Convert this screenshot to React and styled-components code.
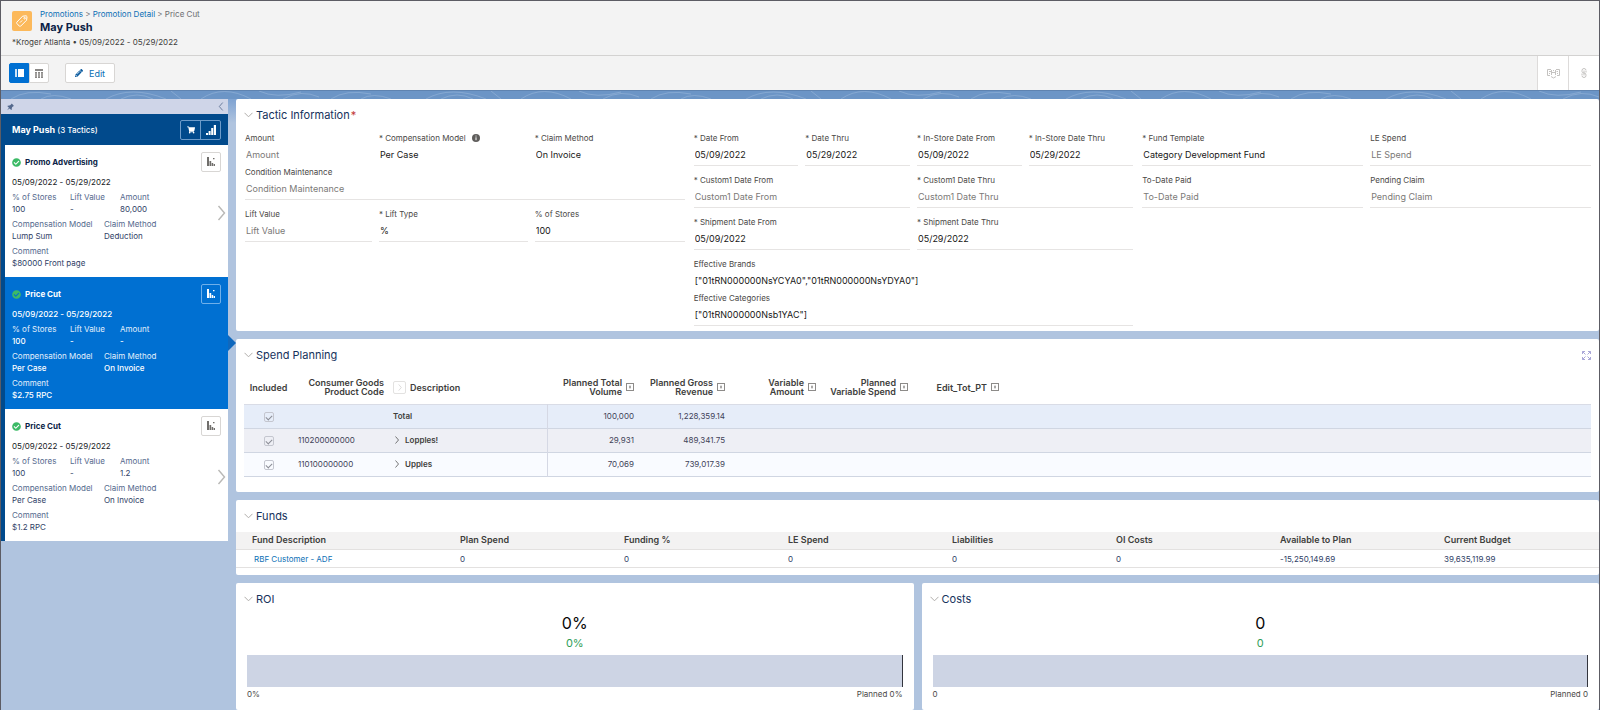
import React from "react";
import styled, { createGlobalStyle, css } from "styled-components";
import { FaShoppingCart, FaPencilAlt, FaCheckCircle } from "react-icons/fa";
import { TiPin } from "react-icons/ti";

const GlobalStyle = createGlobalStyle`
  * {
    box-sizing: border-box;
  }

  body {
    margin: 0;
    background-color: #b0c4df;
    color: #2b2826;
    font-family: Inter, "Open Sans", sans-serif;
    font-size: 8px;
    line-height: 12px;
  }

  button,
  input {
    font-family: inherit;
  }
`;

const Page = styled.div`
  min-height: 100vh;
  border: 1px solid #5c5c64;
`;

/* Page header */

const PageHeader = styled.header`
  padding: 7px 11px;
  background-color: #f3f3f3;
  border-bottom: 1px solid #d3d2d1;
`;

const HeaderTop = styled.div`
  display: flex;
  align-items: center;
  gap: 8px;
`;

const AppIcon = styled.span`
  display: flex;
  align-items: center;
  justify-content: center;
  width: 20px;
  height: 20px;
  border-radius: 2px;
  background-color: #fcb95b;
`;

const Breadcrumbs = styled.nav`
  color: #6b6d70;
`;

const CrumbLink = styled.a`
  color: #0b6fb5;
  text-decoration: none;
`;

const PageTitle = styled.h1`
  margin: 0;
  color: #0c1f47;
  font-size: 11px;
  line-height: 14px;
  font-weight: 700;
`;

const SubTitle = styled.p`
  margin: 2px 0 0;
  color: #3e3e3c;
`;

const Toolbar = styled.div`
  display: flex;
  align-items: center;
  justify-content: space-between;
  height: 34px;
  padding-left: 8px;
  background-color: #f3f3f3;
`;

const ToolbarGroup = styled.div`
  display: flex;
  align-items: center;
  height: 100%;
`;

const ViewButton = styled.button`
  display: flex;
  align-items: center;
  justify-content: center;
  width: 20px;
  height: 20px;
  padding: 0;
  border: 1px solid ${(props) => (props.$active ? "#0070d2" : "#d8d6d4")};
  border-radius: ${(props) => (props.$active ? "2px 0 0 2px" : "0 2px 2px 0")};
  background-color: ${(props) => (props.$active ? "#0070d2" : "#ffffff")};
  color: ${(props) => (props.$active ? "#ffffff" : "#8a8886")};
`;

const EditButton = styled.button`
  display: flex;
  align-items: center;
  justify-content: center;
  gap: 6px;
  width: 50px;
  height: 20px;
  margin-left: 16px;
  padding: 0;
  border: 1px solid #d8d6d4;
  border-radius: 2px;
  background-color: #ffffff;
  color: #0b6fb5;
  font-size: 9px;
`;

const CornerButton = styled.button`
  display: flex;
  align-items: center;
  justify-content: center;
  width: 31px;
  height: 100%;
  padding: 0;
  border: 0;
  border-left: 1px solid #dddbda;
  background-color: #ffffff;
  color: #c4c2c0;
`;

/* Body */

const Band = styled.div`
  height: 9px;
  border-top: 1px solid #5f83b0;
  background-color: #6c95c6;

  svg {
    display: block;
  }
`;

const Body = styled.div`
  display: grid;
  grid-template-columns: 227px minmax(0, 1fr);
  gap: 8px;
  background-image: linear-gradient(#7fa3d2, #b0c4df 24px);
`;

const Sidebar = styled.aside`
  align-self: start;
`;

const PinBar = styled.div`
  display: flex;
  align-items: center;
  justify-content: space-between;
  height: 15px;
  padding: 0 4px;
  background-color: #cfd5e8;
  color: #54698d;
`;

const IconButton = styled.button`
  display: flex;
  padding: 0;
  border: 0;
  background: none;
  color: ${(props) => props.$color || "inherit"};
`;

const TacticList = styled.div`
  border-left: 4px solid #014a8c;
`;

const ListHeader = styled.div`
  display: flex;
  align-items: center;
  justify-content: space-between;
  height: 31px;
  padding: 0 7px;
  background-color: #014a8c;
  color: #ffffff;
`;

const ListTitle = styled.h2`
  margin: 0;
  font-size: 9px;
  font-weight: 700;

  span {
    font-size: 8px;
    font-weight: 500;
  }
`;

const ButtonPair = styled.div`
  display: flex;
  border: 1px solid #6d9bc9;
  border-radius: 2px;
`;

const PairButton = styled.button`
  display: flex;
  align-items: center;
  justify-content: center;
  width: 19px;
  height: 18px;
  padding: 0;
  border: 0;
  background: none;
  color: #ffffff;

  & + & {
    width: 20px;
    border-left: 1px solid #6d9bc9;
  }
`;

const TacticCard = styled.article`
  position: relative;
  height: 132px;
  padding: 7px 7px 0;
  background-color: #ffffff;
  color: #2f4166;

  ${(props) =>
    props.$selected &&
    css`
      background-color: #0070d2;
      color: #ffffff;
      font-weight: 500;

      &::after {
        content: "";
        position: absolute;
        top: 58px;
        left: 100%;
        border: 8px solid transparent;
        border-right-width: 0;
        border-left-color: #1068bd;
      }
    `}
`;

const CardTop = styled.div`
  display: flex;
  align-items: center;
  gap: 4px;
  height: 20px;
  color: #3cba66;
`;

const CardName = styled.h3`
  flex: 1;
  margin: 0;
  color: ${(props) => (props.$selected ? "#ffffff" : "#0c1f47")};
  font-size: 8px;
  font-weight: 700;
`;

const ChartButton = styled.button`
  display: flex;
  align-items: center;
  justify-content: center;
  width: 20px;
  height: 20px;
  padding: 0;
  border: 1px solid ${(props) => (props.$selected ? "#6fb0ea" : "#d8d6d4")};
  border-radius: 2px;
  background: none;
  color: ${(props) => (props.$selected ? "#ffffff" : "#706e6b")};
`;

const CardDates = styled.p`
  margin: 4px 0 3px;
  color: ${(props) => (props.$selected ? "#ffffff" : "#181b25")};
`;

const Facts = styled.dl`
  display: grid;
  grid-template-columns: ${(props) => props.$columns};
  margin: 0 0 3px;

  dt {
    color: ${(props) => (props.$selected ? "#e3effb" : "#54698d")};
    font-weight: 400;
  }

  dd {
    margin: 0;
  }
`;

const OpenTactic = styled.button`
  position: absolute;
  top: 60px;
  right: 2px;
  display: flex;
  padding: 0;
  border: 0;
  background: none;
  color: #b9b8b6;
`;

const Content = styled.main`
  display: flex;
  flex-direction: column;
  gap: 8px;
`;

const Panel = styled.section`
  min-width: 0;
  padding-bottom: ${(props) => props.$bottom}px;
  border-radius: 2px;
  background-color: #ffffff;
`;

const PanelHead = styled.div`
  display: flex;
  align-items: center;
  gap: 3px;
  height: 32px;
  padding: 0 8px;
  color: #b0adab;
`;

const PanelTitle = styled.h2`
  flex: 1;
  margin: 0;
  color: #16325c;
  font-size: 11px;
  line-height: 16px;
  font-weight: 400;

  span {
    margin-left: 1px;
    color: #c23934;
  }
`;

const FormColumns = styled.div`
  display: grid;
  grid-template-columns: repeat(2, minmax(0, 440fr)) minmax(0, 449fr);
  align-items: start;
  column-gap: 9px;
  padding: 1px 8px 0 9px;
`;

const FieldGrid = styled.div`
  display: grid;
  grid-template-columns: ${(props) => props.$columns};
  gap: 0 7px;
  align-items: start;
`;

const FieldBox = styled.div`
  grid-column: span ${(props) => props.$span || 1};
  margin-bottom: ${(props) => (props.$tight ? 0 : 8)}px;
  border-bottom: 1px solid ${(props) => (props.$tight ? "transparent" : "#e6e4e3")};

  &:last-child {
    margin-bottom: 4px;
  }
`;

const FieldLabel = styled.label`
  display: flex;
  align-items: center;
  gap: 6px;
  height: 12px;
  color: #4a4846;
  white-space: nowrap;
`;

const FieldInput = styled.input`
  display: block;
  width: 100%;
  height: 21px;
  padding: 0 1px;
  border: 0;
  background: none;
  color: #181716;
  font-size: 9px;
  outline: none;

  &::placeholder {
    color: #7b7977;
    opacity: 1;
  }
`;

/* Spend planning */

const SpendWrap = styled.div`
  padding: 4px 8px 0;
`;

const SpendTable = styled.table`
  width: 100%;
  table-layout: fixed;
  border-collapse: collapse;
  color: #3e4258;

  th,
  td {
    padding: 0 5px;
    text-align: right;
  }

  thead th {
    height: 29px;
    padding: 0 5px 4px 0;
    color: #3e3e3c;
    font-size: 9px;
    font-weight: 600;
    line-height: 9px;
    white-space: nowrap;
  }

  td:nth-child(1),
  thead th:nth-child(1) {
    padding-left: 5px;
    text-align: center;
  }

  td:nth-child(2) {
    padding-right: 0;
    text-align: left;
  }

  td:nth-child(3),
  thead th:nth-child(3) {
    padding-left: 4px;
    text-align: left;
  }

  td:nth-child(3) {
    border-right: 1px solid #d5d8e4;
    color: #3e3e3c;
    font-weight: 600;
  }
`;

const SpendRow = styled.tr`
  height: 24px;
  border-top: 1px solid #d9dce6;
  border-bottom: 1px solid #d0d6e2;
  background-color: ${(props) => props.$background};
`;

const HeadCell = styled.div`
  display: flex;
  align-items: center;
  justify-content: ${(props) => (props.$start ? "flex-start" : "flex-end")};
  gap: 4px;
`;

const ExpandAll = styled.button`
  display: flex;
  align-items: center;
  justify-content: center;
  width: 13px;
  height: 13px;
  padding: 0;
  border: 1px solid #e3e2e1;
  border-radius: 2px;
  background: none;
  color: #c9c7c5;
`;

const Check = styled.input`
  display: inline-block;
  width: 10px;
  height: 10px;
  margin: 0;
  border: 1px solid #c4c6cf;
  border-radius: 2px;
  appearance: none;
  vertical-align: middle;

  &:checked::after {
    content: "";
    display: block;
    width: 5px;
    height: 3px;
    margin: 2px 0 0 1px;
    border-left: 1px solid #8b8d96;
    border-bottom: 1px solid #8b8d96;
    transform: rotate(-45deg);
  }
`;

const RowName = styled.div`
  display: flex;
  align-items: center;
  gap: 4px;
`;

/* Funds */

const FundsTable = styled.table`
  width: 100%;
  table-layout: fixed;
  border-collapse: collapse;
  color: #2f4166;

  th,
  td {
    height: 18px;
    padding: 0;
    text-align: left;
  }

  th {
    background-color: #f3f2f2;
    color: #3e3e3c;
    font-size: 9px;
    font-weight: 600;
  }

  th:first-child {
    padding-left: 16px;
  }

  td:first-child {
    padding-left: 18px;
  }

  tr {
    border-bottom: 1px solid #e3e1e0;
  }
`;

/* Charts */

const ChartRow = styled.div`
  display: grid;
  grid-template-columns: repeat(2, minmax(0, 1fr));
  gap: 8px;
`;

const ChartBody = styled.div`
  padding: 0 11px;
`;

const Figure = styled.p`
  margin: 0;
  color: ${(props) => (props.$planned ? "#2f9e58" : "#080707")};
  font-size: ${(props) => (props.$planned ? 11 : 16)}px;
  line-height: ${(props) => (props.$planned ? 24 : 16)}px;
  text-align: center;
`;

const Bar = styled.div`
  height: 32px;
  border-right: 1px solid #33353d;
  background-color: #cdd4e4;
`;

const BarScale = styled.div`
  display: flex;
  justify-content: space-between;
  padding-top: 1px;
  color: #4a4846;
`;

const ChevronDown = () => (
  <svg width="9" height="6" viewBox="0 0 9 6" fill="none" stroke="currentColor">
    <path d="M0.5 0.8L4.5 4.8L8.5 0.8" />
  </svg>
);

const Chevron = ({ width, height, left }) => (
  <svg width={width} height={height} viewBox="0 0 8 16" fill="none" stroke="currentColor" strokeWidth="1.4">
    <path d={left ? "M7 1L1 8L7 15" : "M1 1L7 8L1 15"} />
  </svg>
);

const MiniChart = () => (
  <svg width="10" height="10" viewBox="0 0 10 10" fill="currentColor">
    <path d="M1 0H3V9H1ZM3.5 4H5.2V9H3.5ZM5.7 6H7.2V9H5.7ZM7.7 7H9V9H7.7ZM7 1H8.5V2.2H7Z" />
  </svg>
);

const SignalBars = () => (
  <svg width="10" height="10" viewBox="0 0 10 10" fill="currentColor">
    <path d="M0 8H2V10H0ZM2.6 6H4.6V10H2.6ZM5.2 3H7.2V10H5.2ZM7.8 0H10V10H7.8Z" />
  </svg>
);

const Field = ({ id, label, value, required, info, span, tight }) => (
  <FieldBox $span={span} $tight={tight}>
    <FieldLabel htmlFor={id}>
      {required ? `* ${label}` : label}
      {info && (
        <svg width="8" height="8" viewBox="0 0 8 8">
          <circle cx="4" cy="4" r="4" fill="#5f5d5b" />
          <path d="M4 1.6V2.5M4 3.3V6.2" stroke="#ffffff" strokeWidth="1" />
        </svg>
      )}
    </FieldLabel>
    <FieldInput id={id} type="text" defaultValue={value} placeholder={value ? undefined : label} />
  </FieldBox>
);

const PanelHeading = ({ title, required, children }) => (
  <PanelHead>
    <IconButton aria-label={`Collapse ${title}`}>
      <ChevronDown />
    </IconButton>
    <PanelTitle>
      {title}
      {required && <span>*</span>}
    </PanelTitle>
    {children}
  </PanelHead>
);

const tactics = [
  {
    id: 1,
    name: "Promo Advertising",
    amount: "80,000",
    model: "Lump Sum",
    method: "Deduction",
    comment: "$80000 Front page",
  },
  {
    id: 2,
    name: "Price Cut",
    amount: "-",
    model: "Per Case",
    method: "On Invoice",
    comment: "$2.75 RPC",
    selected: true,
  },
  {
    id: 3,
    name: "Price Cut",
    amount: "1.2",
    model: "Per Case",
    method: "On Invoice",
    comment: "$1.2 RPC",
  },
];

const measures = [
  ["Planned Total", "Volume"],
  ["Planned Gross", "Revenue"],
  ["Variable", "Amount"],
  ["Planned", "Variable Spend"],
  ["Edit_Tot_PT"],
];

const products = [
  { name: "Total", volume: "100,000", revenue: "1,228,359.14", background: "#e6edf9" },
  { code: "110200000000", name: "Lopples!", volume: "29,931", revenue: "489,341.75", background: "#eeeff5" },
  { code: "110100000000", name: "Upples", volume: "70,069", revenue: "739,017.39", background: "#f9fbff" },
];

const funds = [
  ["Plan Spend", "0"],
  ["Funding %", "0"],
  ["LE Spend", "0"],
  ["Liabilities", "0"],
  ["OI Costs", "0"],
  ["Available to Plan", "-15,250,149.69"],
  ["Current Budget", "39,635,119.99"],
];

const Tactic = ({ tactic }) => {
  const selected = tactic.selected;
  return (
    <TacticCard $selected={selected}>
      <CardTop>
        <FaCheckCircle size={9} />
        <CardName $selected={selected}>{tactic.name}</CardName>
        <ChartButton $selected={selected} aria-label="Show tactic chart">
          <MiniChart />
        </ChartButton>
      </CardTop>
      <CardDates $selected={selected}>05/09/2022 - 05/29/2022</CardDates>
      <Facts $columns="58px 50px 1fr" $selected={selected}>
        <dt>% of Stores</dt>
        <dt>Lift Value</dt>
        <dt>Amount</dt>
        <dd>100</dd>
        <dd>-</dd>
        <dd>{tactic.amount}</dd>
      </Facts>
      <Facts $columns="92px 1fr" $selected={selected}>
        <dt>Compensation Model</dt>
        <dt>Claim Method</dt>
        <dd>{tactic.model}</dd>
        <dd>{tactic.method}</dd>
      </Facts>
      <Facts $columns="1fr" $selected={selected}>
        <dt>Comment</dt>
        <dd>{tactic.comment}</dd>
      </Facts>
      {!selected && (
        <OpenTactic aria-label="Open tactic">
          <Chevron width={9} height={16} />
        </OpenTactic>
      )}
    </TacticCard>
  );
};

const Chart = ({ title, value }) => (
  <Panel $bottom={10}>
    <PanelHeading title={title} />
    <ChartBody>
      <Figure>{value}</Figure>
      <Figure $planned>{value}</Figure>
      <Bar />
      <BarScale>
        <span>{value}</span>
        <span>Planned {value}</span>
      </BarScale>
    </ChartBody>
  </Panel>
);

const App = () => {
  return (
    <Page>
      <GlobalStyle />
      <PageHeader>
        <HeaderTop>
          <AppIcon>
            <svg width="14" height="14" viewBox="0 0 14 14" fill="none" stroke="#ffffff" strokeLinejoin="round">
              <path d="M7.6 2.2L11.2 1.8L12 2.6L11.6 6.2L5.6 12.2Q5 12.6 4.4 12.2L1.8 9.4Q1.4 8.8 1.8 8.2Z" />
              <circle cx="9.6" cy="4.2" r="0.8" />
              <path d="M5 8.6L7.2 6.4" />
            </svg>
          </AppIcon>
          <div>
            <Breadcrumbs>
              <CrumbLink href="#promotions">Promotions</CrumbLink> &gt;{" "}
              <CrumbLink href="#detail">Promotion Detail</CrumbLink> &gt; Price Cut
            </Breadcrumbs>
            <PageTitle>May Push</PageTitle>
          </div>
        </HeaderTop>
        <SubTitle>*Kroger Atlanta • 05/09/2022 - 05/29/2022</SubTitle>
      </PageHeader>

      <Toolbar>
        <ToolbarGroup>
          <ViewButton $active aria-label="Split view">
            <svg width="9" height="8" viewBox="0 0 9 8" fill="currentColor">
              <rect width="2" height="8" opacity="0.8" />
              <rect x="3" width="6" height="8" />
            </svg>
          </ViewButton>
          <ViewButton aria-label="Table view">
            <svg width="8" height="9" viewBox="0 0 8 9" fill="currentColor">
              <path d="M0 0H8V2H0ZM0 3H2V9H0ZM3 3H5V9H3ZM6 3H8V9H6Z" />
              <path d="M0 5H8M0 7H8" stroke="#ffffff" strokeWidth="0.4" />
            </svg>
          </ViewButton>
          <EditButton>
            <FaPencilAlt size={8} color="#0a5a9e" />
            Edit
          </EditButton>
        </ToolbarGroup>
        <ToolbarGroup>
          <CornerButton aria-label="Manage promotion">
            <svg width="13" height="11" viewBox="0 0 13 11" fill="none" stroke="currentColor">
              <path d="M4 1.5H0.5V7.5H3M2 3.5H4M2 5.5H3M9 1.5H12.5V7.5H10M11 3.5H9.5M4.5 2V7M4.5 4.5H8.5M8.5 2V7M6 2.5H7M4 8.5L6.5 10L9 8.5M11 5.5H10" />
            </svg>
          </CornerButton>
          <CornerButton aria-label="Attachments">
            <svg width="6" height="10" viewBox="0 0 6 10" fill="none" stroke="currentColor">
              <path d="M5 2.5Q5 0.5 3 0.5Q1 0.5 1 2.5V3.5Q1 5 3 5Q5 5 5 7V7.5Q5 9.5 3 9.5Q1 9.5 1 7.5M3 2.5V7.5M5 3V4.5M1 5.5V7" />
            </svg>
          </CornerButton>
        </ToolbarGroup>
      </Toolbar>

      <Band>
        <svg width="100%" height="8">
          <defs>
            <pattern id="waves" width="320" height="8" patternUnits="userSpaceOnUse">
              <g fill="none" stroke="#a9c3e2" strokeWidth="1" opacity="0.4">
                <path d="M10 8Q25 -2 50 3M40 8Q52 1 70 8M105 8Q130 -6 165 8M120 8Q136 0 152 8M170 0L180 8M200 8Q222 -7 250 8M258 0Q275 8 300 1M282 8Q300 -2 318 6" />
              </g>
            </pattern>
          </defs>
          <rect width="100%" height="8" fill="url(#waves)" />
        </svg>
      </Band>

      <Body>
        <Sidebar>
          <PinBar>
            <IconButton aria-label="Pin">
              <TiPin size={10} />
            </IconButton>
            <IconButton aria-label="Collapse list">
              <Chevron width={6} height={9} left />
            </IconButton>
          </PinBar>
          <TacticList>
            <ListHeader>
              <ListTitle>
                May Push <span>(3 Tactics)</span>
              </ListTitle>
              <ButtonPair>
                <PairButton aria-label="Products">
                  <FaShoppingCart size={8} />
                </PairButton>
                <PairButton aria-label="Statistics">
                  <SignalBars />
                </PairButton>
              </ButtonPair>
            </ListHeader>
            {tactics.map((tactic) => (
              <Tactic key={tactic.id} tactic={tactic} />
            ))}
          </TacticList>
        </Sidebar>

        <Content>
          <Panel $bottom={1}>
            <PanelHeading title="Tactic Information" required />
            <FormColumns>
              <FieldGrid $columns="127fr 149fr 150fr">
                <Field id="amount" label="Amount" tight />
                <Field id="model" label="Compensation Model" value="Per Case" required info tight />
                <Field id="method" label="Claim Method" value="On Invoice" required tight />
                <Field id="condition" label="Condition Maintenance" span={3} />
                <Field id="liftValue" label="Lift Value" />
                <Field id="liftType" label="Lift Type" value="%" required />
                <Field id="stores" label="% of Stores" value="100" />
              </FieldGrid>
              <FieldGrid $columns="repeat(4, minmax(0, 1fr))">
                <Field id="dateFrom" label="Date From" value="05/09/2022" required />
                <Field id="dateThru" label="Date Thru" value="05/29/2022" required />
                <Field id="storeFrom" label="In-Store Date From" value="05/09/2022" required />
                <Field id="storeThru" label="In-Store Date Thru" value="05/29/2022" required />
                <Field id="customFrom" label="Custom1 Date From" required span={2} />
                <Field id="customThru" label="Custom1 Date Thru" required span={2} />
                <Field id="shipFrom" label="Shipment Date From" value="05/09/2022" required span={2} />
                <Field id="shipThru" label="Shipment Date Thru" value="05/29/2022" required span={2} />
                <Field id="brands" label="Effective Brands" value={'["01tRN000000NsYCYA0","01tRN000000NsYDYA0"]'} span={4} tight />
                <Field id="categories" label="Effective Categories" value={'["01tRN000000Nsb1YAC"]'} span={4} />
              </FieldGrid>
              <FieldGrid $columns="repeat(2, minmax(0, 1fr))">
                <Field id="template" label="Fund Template" value="Category Development Fund" required />
                <Field id="leSpend" label="LE Spend" />
                <Field id="paid" label="To-Date Paid" />
                <Field id="claim" label="Pending Claim" />
              </FieldGrid>
            </FormColumns>
          </Panel>

          <Panel $bottom={15}>
            <PanelHeading title="Spend Planning">
              <IconButton $color="#a9a6d8" aria-label="Expand">
                <svg width="9" height="9" viewBox="0 0 9 9" fill="none" stroke="currentColor">
                  <path d="M0.5 3V0.5H3M0.5 0.5L3.5 3.5M6 0.5H8.5V3M8.5 0.5L5.5 3.5M8.5 6V8.5H6M8.5 8.5L5.5 5.5M3 8.5H0.5V6M0.5 8.5L3.5 5.5" />
                </svg>
              </IconButton>
            </PanelHeading>
            <SpendWrap>
              <SpendTable>
                <colgroup>
                  <col width="49" />
                  <col width="96" />
                  <col width="158" />
                  <col width="92" />
                  <col width="91" />
                  <col width="91" />
                  <col width="92" />
                  <col width="91" />
                  <col />
                </colgroup>
                <thead>
                  <tr>
                    <th>Included</th>
                    <th>
                      Consumer Goods
                      <br />
                      Product Code
                    </th>
                    <th>
                      <HeadCell $start>
                        <ExpandAll aria-label="Expand all">
                          <Chevron width={4} height={7} />
                        </ExpandAll>
                        Description
                      </HeadCell>
                    </th>
                    {measures.map((lines) => (
                      <th key={lines.join(" ")}>
                        <HeadCell>
                          <span>
                            {lines[0]}
                            {lines[1] && <br />}
                            {lines[1]}
                          </span>
                          <svg width="8" height="8" viewBox="0 0 8 8" fill="none" stroke="#8d8b89">
                            <rect x="0.5" y="0.5" width="7" height="7" />
                            <path d="M4 2.5V5.5M3 4H5" />
                          </svg>
                        </HeadCell>
                      </th>
                    ))}
                    <th aria-hidden="true" />
                  </tr>
                </thead>
                <tbody>
                  {products.map((product) => (
                    <SpendRow key={product.name} $background={product.background}>
                      <td>
                        <Check type="checkbox" defaultChecked disabled aria-label={`Include ${product.name}`} />
                      </td>
                      <td>{product.code}</td>
                      <td>
                        <RowName>
                          {product.code && (
                            <IconButton aria-label={`Expand ${product.name}`}>
                              <Chevron width={8} height={8} />
                            </IconButton>
                          )}
                          {product.name}
                        </RowName>
                      </td>
                      <td>{product.volume}</td>
                      <td>{product.revenue}</td>
                      <td colSpan={4} />
                    </SpendRow>
                  ))}
                </tbody>
              </SpendTable>
            </SpendWrap>
          </Panel>

          <Panel $bottom={7}>
            <PanelHeading title="Funds" />
            <FundsTable>
              <colgroup>
                <col width="224" />
                <col width="164" span="6" />
                <col />
              </colgroup>
              <thead>
                <tr>
                  <th>Fund Description</th>
                  {funds.map(([label]) => (
                    <th key={label}>{label}</th>
                  ))}
                </tr>
              </thead>
              <tbody>
                <tr>
                  <td>
                    <CrumbLink href="#fund">RBF Customer - ADF</CrumbLink>
                  </td>
                  {funds.map(([label, value]) => (
                    <td key={label}>{value}</td>
                  ))}
                </tr>
              </tbody>
            </FundsTable>
          </Panel>

          <ChartRow>
            <Chart title="ROI" value="0%" />
            <Chart title="Costs" value="0" />
          </ChartRow>
        </Content>
      </Body>
    </Page>
  );
};

export default App;
